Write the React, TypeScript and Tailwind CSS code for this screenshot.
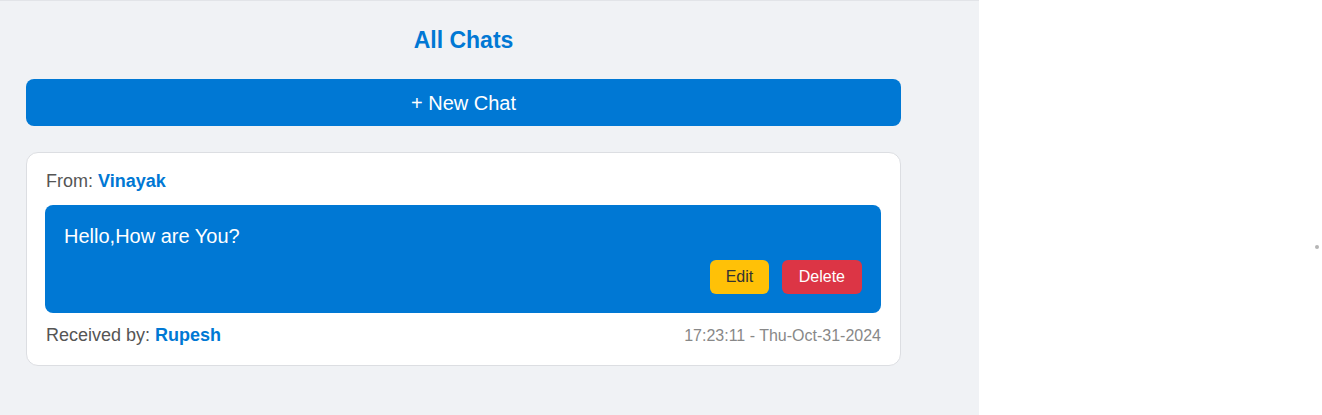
export default function App() {
  return (
    <div className="flex h-[415px] w-full bg-white font-['Liberation_Sans',Arial,sans-serif]">
      {/* Chat list panel */}
      <section className="h-full w-[979px] shrink-0 border-t border-[#e2e4e8] bg-[#f0f2f5] pl-[26px]">
        <div className="w-[875px]">
          <h2 className="mt-[26px] text-center text-[23px] font-bold leading-[26px] text-[#0078d4]">All Chats</h2>

          <button className="mt-[26px] h-[47px] w-full rounded-lg bg-[#0078d4] text-[20px] text-white">
            + New Chat
          </button>

          <div className="mt-[26px] rounded-xl border border-[#dcdee2] bg-white pt-[18px] pr-[19px] pb-[19px] pl-[18px]">
            <p className="pl-px text-[18px] leading-[21px] text-[#555]">
              From: <span className="font-bold text-[#0078d4]">Vinayak</span>
            </p>

            <div className="mt-[13px] rounded-lg bg-[#0078d4] pt-[20px] pr-[19px] pb-[19px] pl-[19px]">
              <p className="text-[20px] leading-[23px] text-white">Hello,How are You?</p>
              <div className="mt-[12px] flex justify-end gap-[13px]">
                <button className="h-[34px] rounded-md bg-[#ffc107] px-[15.5px] text-[16px] text-[#333]">Edit</button>
                <button className="h-[34px] rounded-md bg-[#dc3545] px-[17px] text-[16px] text-white">Delete</button>
              </div>
            </div>

            <div className="mt-[12px] flex items-center justify-between pl-px">
              <p className="text-[18px] leading-[21px] text-[#555]">
                Received by: <span className="font-bold text-[#0078d4]">Rupesh</span>
              </p>
              <span className="text-[16px] leading-[21px] text-[#888]">17:23:11 - Thu-Oct-31-2024</span>
            </div>
          </div>
        </div>
      </section>

      {/* Empty conversation area */}
      <div className="flex flex-1 flex-col items-end pt-[245px] pr-[3px]">
        <span className="h-[4px] w-[4px] rounded-full bg-[#b5b5b5]" />
      </div>
    </div>
  );
}
